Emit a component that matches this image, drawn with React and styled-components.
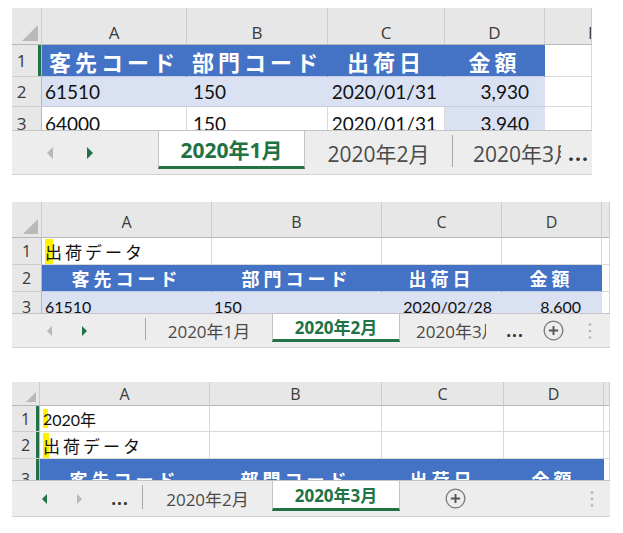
import React from "react";
import styled, { createGlobalStyle } from "styled-components";

const GREEN = "#217346";
const BLUE = "#4472c4";
const BAND = "#d9e1f2";
const LINE = "#d9d9d9";

const GlobalStyle = createGlobalStyle`
  html, body {
    margin: 0;
    padding: 0;
    background: #fff;
  }
  body {
    font-family: Lato, "Noto Sans CJK JP", sans-serif;
    color: #111;
  }
`;

const Page = styled.main`
  display: flex;
  flex-direction: column;
  align-items: flex-start;
  padding-left: 12px;
`;

const Panel = styled.section`
  width: ${(p) => p.$w}px;
  margin-top: ${(p) => p.$mt}px;
  display: flex;
  flex-direction: column;
`;

const Grid = styled.div`
  display: grid;
  grid-template-columns: ${(p) => p.$cols.map((c) => c + "px").join(" ")};
  grid-template-rows: ${(p) => p.$rows.map((r) => r + "px").join(" ")};
  height: ${(p) => p.$h}px;
  overflow: hidden;
`;

const HeadCell = styled.div`
  box-sizing: border-box;
  background: #e7e7e7;
  border-right: 1px solid #cdcdcd;
  border-bottom: 1px solid #b8b8b8;
  display: flex;
  align-items: center;
  justify-content: ${(p) => (p.$pl ? "flex-start" : "center")};
  padding: ${(p) => p.$pt || 0}px 0 0 ${(p) => p.$pl || 0}px;
  font-family: "Open Sans", sans-serif;
  font-size: ${(p) => p.$fs}px;
  color: #3a3a3a;
  white-space: nowrap;
  overflow: hidden;
`;

const Corner = styled(HeadCell)`
  align-items: flex-end;
  justify-content: flex-end;
  padding: 0 3px 3px 0;
`;

const RowNum = styled.div`
  box-sizing: border-box;
  background: #e7e7e7;
  border-right: 1px solid #b8b8b8;
  border-bottom: 1px solid #cdcdcd;
  display: flex;
  align-items: center;
  justify-content: center;
  padding-right: ${(p) => p.$pr || 0}px;
  font-family: "Open Sans", sans-serif;
  font-size: ${(p) => p.$fs}px;
  color: #3a3a3a;
  box-shadow: ${(p) => (p.$sel ? `inset -3px 0 0 ${GREEN}` : "none")};
`;

const bgOf = (kind) => (kind === "head" ? BLUE : kind === "band" ? BAND : "#fff");

const Cell = styled.div`
  box-sizing: border-box;
  display: flex;
  align-items: center;
  justify-content: ${(p) =>
    p.$align === "right" ? "flex-end" : p.$align === "center" ? "center" : "flex-start"};
  padding: 0 ${(p) => p.$px}px;
  background: ${(p) => bgOf(p.$kind)};
  color: ${(p) => (p.$kind === "head" ? "#fff" : "#111")};
  font-weight: ${(p) => (p.$kind === "head" ? 700 : 400)};
  font-size: ${(p) => p.$fs}px;
  letter-spacing: ${(p) => p.$ls || 0}px;
  border-right: 1px solid ${(p) => (p.$kind === "plain" ? LINE : bgOf(p.$kind))};
  border-bottom: 1px solid
    ${(p) => (p.$kind === "plain" ? LINE : p.$kind === "head" ? "#c3cee4" : "#c4cde0")};
  white-space: nowrap;
  overflow: hidden;
`;

const Mark = styled.span`
  background: linear-gradient(
    to right,
    #fff200 ${(p) => p.$cover}%,
    transparent ${(p) => p.$cover}%
  );
`;

const TabBar = styled.div`
  box-sizing: border-box;
  height: ${(p) => p.$h}px;
  display: flex;
  align-items: stretch;
  background: #ededed;
  border-top: 1px solid #c4c4c4;
  border-bottom: 1px solid #d2d2d2;
  padding-right: ${(p) => p.$pr || 0}px;
  font-family: "Open Sans", "Noto Sans CJK JP", sans-serif;
  font-size: ${(p) => p.$fs}px;
`;

const Nav = styled.div`
  box-sizing: border-box;
  flex: none;
  width: ${(p) => p.$w}px;
  display: flex;
  align-items: center;
  padding-left: ${(p) => p.$pl}px;
  gap: ${(p) => p.$gap}px;
`;

const Tab = styled.div`
  box-sizing: border-box;
  flex: none;
  width: ${(p) => p.$w}px;
  display: flex;
  align-items: center;
  justify-content: ${(p) => (p.$pl ? "flex-start" : "center")};
  padding-left: ${(p) => p.$pl || 0}px;
  overflow: hidden;
  white-space: nowrap;
  color: #4a4a4a;
`;

const ActiveTab = styled(Tab)`
  background: #fff;
  color: ${GREEN};
  font-weight: 700;
  border-left: 1px solid #c4c4c4;
  border-right: 1px solid #c4c4c4;
  border-bottom: 3px solid ${GREEN};
  margin-bottom: 5px;
`;

const Sep = styled.div`
  flex: none;
  width: 1px;
  background: #a8a8a8;
  margin: 4px 0 7px;
`;

const Dots = styled.div`
  flex: none;
  width: ${(p) => p.$w}px;
  display: flex;
  align-items: center;
  justify-content: center;
  font-weight: 700;
  color: #333;
  letter-spacing: 1px;
`;

const IconBox = styled.div`
  flex: none;
  width: ${(p) => p.$w}px;
  display: flex;
  align-items: center;
  justify-content: center;
`;

const Gap = styled.div`
  flex: none;
  width: ${(p) => p.$w}px;
`;

const Fill = styled.div`
  flex: 1;
`;

const Triangle = ({ size }) => (
  <svg width={size} height={size} viewBox="0 0 10 10">
    <polygon points="10,0 10,10 0,10" fill="#b9b9b9" />
  </svg>
);

const Arrow = ({ dir, on, h }) => (
  <svg width={h / 2} height={h} viewBox="0 0 5 10">
    <polygon
      points={dir === "left" ? "5,0 0,5 5,10" : "0,0 5,5 0,10"}
      fill={on ? GREEN : "#b8b8b8"}
    />
  </svg>
);

const PlusCircle = ({ d }) => (
  <svg width={d} height={d} viewBox="0 0 22 22">
    <circle cx="11" cy="11" r="9.8" fill="none" stroke="#7a7a7a" strokeWidth="1.4" />
    <path d="M11 6.2v9.6M6.2 11h9.6" stroke="#555" strokeWidth="2" />
  </svg>
);

const Kebab = () => (
  <svg width="4" height="18" viewBox="0 0 4 18">
    <circle cx="2" cy="2.5" r="1.3" fill="#b3b3b3" />
    <circle cx="2" cy="9" r="1.3" fill="#b3b3b3" />
    <circle cx="2" cy="15.5" r="1.3" fill="#b3b3b3" />
  </svg>
);

const sheets = [
  {
    mt: 8,
    w: 580,
    cols: [30, 145, 141, 117, 100, 47],
    rows: [37, 32, 30, 34],
    gridH: 122,
    letters: ["A", "B", "C", "D", "E"],
    head: { fs: 17, pt: 12, lastPl: 43 },
    num: { fs: 17, pr: 10 },
    fs: { cell: 19, head: 22, headLs: 4, title: 19, titleLs: 3 },
    pad: [3, 6, 7, 15],
    data: [
      {
        n: 1,
        sel: true,
        cells: [
          { t: "客先コード", k: "head", a: "center" },
          { t: "部門コード", k: "head", a: "center" },
          { t: "出荷日", k: "head", a: "center" },
          { t: "金額", k: "head", a: "center" },
        ],
      },
      {
        n: 2,
        cells: [
          { t: "61510", k: "band" },
          { t: "150", k: "band" },
          { t: "2020/01/31", k: "band", a: "right" },
          { t: "3,930", k: "band", a: "right" },
        ],
      },
      {
        n: 3,
        cells: [
          { t: "64000", k: "plain" },
          { t: "150", k: "plain" },
          { t: "2020/01/31", k: "plain", a: "right" },
          { t: "3,940", k: "band", a: "right" },
        ],
      },
    ],
    bar: {
      h: 45,
      fs: 21,
      pr: 0,
      items: [
        { type: "nav", w: 146, pl: 35, gap: 34, arrows: [false, true], ah: 12 },
        { type: "active", w: 147, t: "2020年1月" },
        { type: "tab", w: 147, t: "2020年2月" },
        { type: "sep" },
        { type: "tab", w: 108, pl: 20, t: "2020年3月" },
        { type: "gap", w: 4 },
        { type: "dots", w: 27 },
      ],
    },
  },
  {
    mt: 27,
    w: 598,
    cols: [30, 170, 170, 120, 100, 8],
    rows: [36, 27, 27, 30],
    gridH: 111,
    letters: ["A", "B", "C", "D", ""],
    head: { fs: 16, pt: 4 },
    num: { fs: 16 },
    fs: { cell: 16, head: 18, headLs: 4, title: 17, titleLs: 3 },
    pad: [3, 2, 9, 20],
    data: [
      {
        n: 1,
        cells: [
          { t: "出荷データ", k: "plain", jp: true, mark: 42 },
          { t: "", k: "plain" },
          { t: "", k: "plain" },
          { t: "", k: "plain" },
        ],
      },
      {
        n: 2,
        cells: [
          { t: "客先コード", k: "head", a: "center" },
          { t: "部門コード", k: "head", a: "center" },
          { t: "出荷日", k: "head", a: "center" },
          { t: "金額", k: "head", a: "center" },
        ],
      },
      {
        n: 3,
        cells: [
          { t: "61510", k: "band" },
          { t: "150", k: "band" },
          { t: "2020/02/28", k: "band", a: "right" },
          { t: "8,600", k: "band", a: "right" },
        ],
      },
    ],
    bar: {
      h: 35,
      fs: 17,
      pr: 5,
      items: [
        { type: "nav", w: 133, pl: 35, gap: 30, arrows: [false, true], ah: 10 },
        { type: "sep" },
        { type: "tab", w: 126, t: "2020年1月" },
        { type: "active", w: 128, t: "2020年2月" },
        { type: "tab", w: 86, pl: 16, t: "2020年3月" },
        { type: "gap", w: 12 },
        { type: "dots", w: 34 },
        { type: "plus", w: 42 },
        { type: "fill" },
        { type: "kebab", w: 30 },
      ],
    },
  },
  {
    mt: 34,
    w: 598,
    cols: [28, 170, 172, 122, 100, 6],
    rows: [24, 26, 27, 40],
    gridH: 98,
    letters: ["A", "B", "C", "D", ""],
    head: { fs: 16, pt: 0 },
    num: { fs: 16 },
    fs: { cell: 16, head: 18, headLs: 4, title: 17, titleLs: 3 },
    pad: [3, 2, 9, 20],
    data: [
      {
        n: 1,
        sel: true,
        cells: [
          { t: "2020年", k: "plain", mark: 55 },
          { t: "", k: "plain" },
          { t: "", k: "plain" },
          { t: "", k: "plain" },
        ],
      },
      {
        n: 2,
        sel: true,
        cells: [
          { t: "出荷データ", k: "plain", jp: true, mark: 30 },
          { t: "", k: "plain" },
          { t: "", k: "plain" },
          { t: "", k: "plain" },
        ],
      },
      {
        n: 3,
        sel: true,
        cells: [
          { t: "客先コード", k: "head", a: "center" },
          { t: "部門コード", k: "head", a: "center" },
          { t: "出荷日", k: "head", a: "center" },
          { t: "金額", k: "head", a: "center" },
        ],
      },
    ],
    bar: {
      h: 37,
      fs: 17,
      pr: 3,
      items: [
        { type: "nav", w: 130, pl: 30, gap: 30, arrows: [true, false], ah: 10, dots: true },
        { type: "sep" },
        { type: "tab", w: 129, t: "2020年2月" },
        { type: "active", w: 128, t: "2020年3月" },
        { type: "plus", w: 110 },
        { type: "fill" },
        { type: "kebab", w: 30 },
      ],
    },
  },
];

function CellText({ c }) {
  if (!c.mark) return c.t;
  return (
    <>
      <Mark $cover={c.mark}>{c.t.slice(0, 1)}</Mark>
      {c.t.slice(1)}
    </>
  );
}

function BarItem({ it }) {
  switch (it.type) {
    case "nav":
      return (
        <Nav $w={it.w} $pl={it.pl} $gap={it.gap}>
          <Arrow dir="left" on={it.arrows[0]} h={it.ah} />
          <Arrow dir="right" on={it.arrows[1]} h={it.ah} />
          {it.dots && <Dots $w={16}>...</Dots>}
        </Nav>
      );
    case "active":
      return <ActiveTab $w={it.w}>{it.t}</ActiveTab>;
    case "tab":
      return (
        <Tab $w={it.w} $pl={it.pl}>
          {it.t}
        </Tab>
      );
    case "sep":
      return <Sep />;
    case "dots":
      return <Dots $w={it.w}>...</Dots>;
    case "plus":
      return (
        <IconBox $w={it.w}>
          <PlusCircle d={21} />
        </IconBox>
      );
    case "kebab":
      return (
        <IconBox $w={it.w}>
          <Kebab />
        </IconBox>
      );
    case "gap":
      return <Gap $w={it.w} />;
    default:
      return <Fill />;
  }
}

function Sheet({ s }) {
  return (
    <Panel $w={s.w} $mt={s.mt}>
      <Grid $cols={s.cols} $rows={s.rows} $h={s.gridH}>
        <Corner $fs={s.head.fs}>
          <Triangle size={Math.round(s.rows[0] * 0.42)} />
        </Corner>
        {s.letters.map((l, i) => (
          <HeadCell
            key={i}
            $fs={s.head.fs}
            $pt={s.head.pt}
            $pl={i === 4 ? s.head.lastPl : 0}
          >
            {l}
          </HeadCell>
        ))}
        {s.data.map((row) => (
          <React.Fragment key={row.n}>
            <RowNum $fs={s.num.fs} $pr={s.num.pr} $sel={row.sel}>
              {row.n}
            </RowNum>
            {row.cells.map((c, i) => {
              const head = c.k === "head";
              const jp = c.jp;
              return (
                <Cell
                  key={i}
                  $kind={c.k}
                  $align={c.a || "left"}
                  $px={head ? 0 : s.pad[i]}
                  $fs={head ? s.fs.head : jp ? s.fs.title : s.fs.cell}
                  $ls={head ? s.fs.headLs : jp ? s.fs.titleLs : 0}
                >
                  <CellText c={c} />
                </Cell>
              );
            })}
            <Cell $kind="plain" $px={0} $fs={s.fs.cell} />
          </React.Fragment>
        ))}
      </Grid>
      <TabBar $h={s.bar.h} $fs={s.bar.fs} $pr={s.bar.pr}>
        {s.bar.items.map((it, i) => (
          <BarItem key={i} it={it} />
        ))}
      </TabBar>
    </Panel>
  );
}

export default function App() {
  return (
    <>
      <GlobalStyle />
      <Page>
        {sheets.map((s, i) => (
          <Sheet key={i} s={s} />
        ))}
      </Page>
    </>
  );
}
